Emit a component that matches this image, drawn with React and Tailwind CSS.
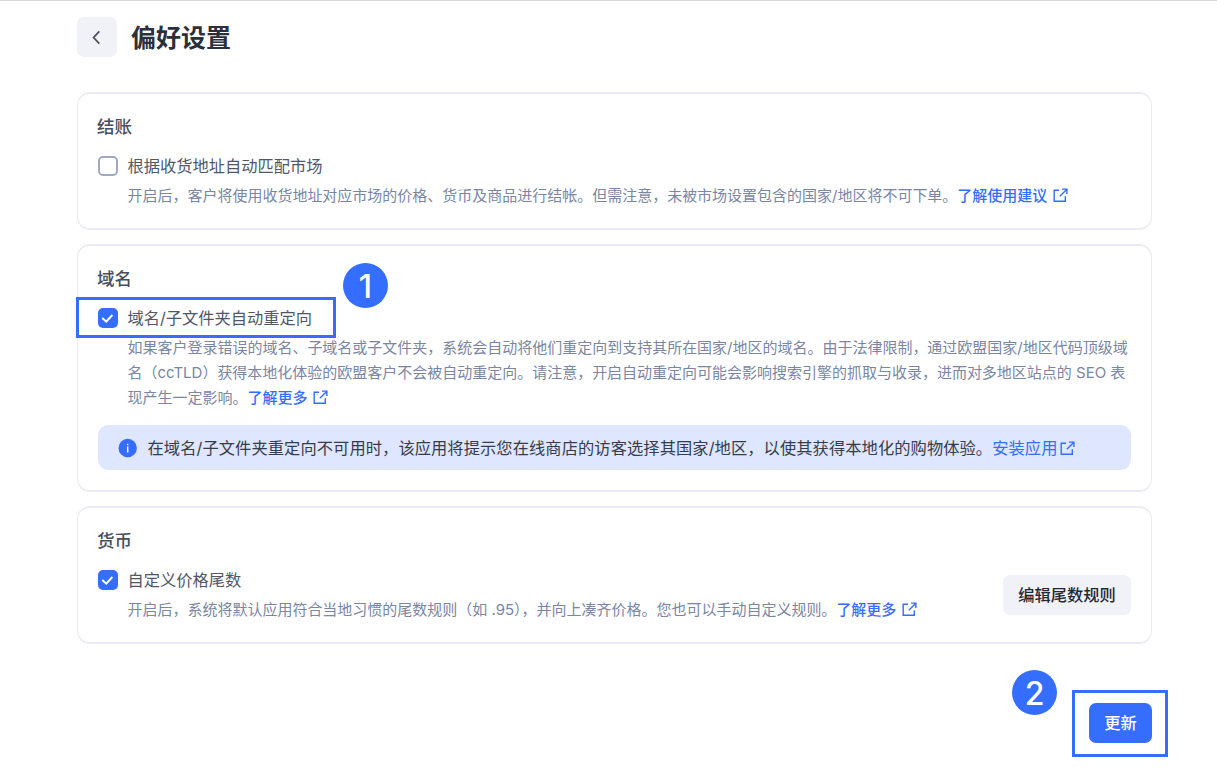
import React, { useState } from "react";

const OpenIcon = ({ className = "" }) => (
  <svg
    className={`inline-block h-[15px] w-[15px] align-[-2px] ${className}`}
    viewBox="0 0 15 15"
    fill="none"
    stroke="currentColor"
    strokeWidth="1.4"
  >
    <path d="M6 2.2H1.2V13.3H12.3V8.3" />
    <path d="M9 1.1H13.9V6M13.6 1.4L6.8 8.2" />
  </svg>
);

const CheckBox = ({ checked, onChange }) => (
  <button
    type="button"
    role="checkbox"
    aria-checked={checked}
    onClick={onChange}
    className={
      checked
        ? "mb-0.5 flex h-5 w-5 shrink-0 items-center justify-center rounded-[5px] bg-[#356dff]"
        : "mb-0.5 h-5 w-5 shrink-0 rounded-[5px] border-2 border-[#a0a8c2] bg-white"
    }
  >
    {checked && (
      <svg className="h-5 w-5" viewBox="0 0 20 20" fill="none">
        <path
          d="M4.3 10.1L8.2 13.7L14.4 7"
          stroke="white"
          strokeWidth="2"
        />
      </svg>
    )}
  </button>
);

const Card = ({ title, children }) => (
  <section className="rounded-[13px] border-x border-y-2 border-[#ebecf3] p-5">
    <h2 className="-ml-px text-[17.5px] leading-[25px] font-medium text-[#474f5e]">
      {title}
    </h2>
    {children}
  </section>
);

const Option = ({ label, checked, onChange, marker, children }) => (
  <div>
    <div className="relative mt-[15px] flex h-[25px] items-center gap-[9.5px]">
      <CheckBox checked={checked} onChange={onChange} />
      <span className="text-[16.25px] leading-[25px] text-[#505867]">
        {label}
      </span>
      {marker}
    </div>
    <p className="mt-1 pl-[29.5px] text-[15px] leading-[25px] tracking-[-0.01px] whitespace-nowrap text-[#7a86a3]">
      {children}
    </p>
  </div>
);

const Link = ({ children }) => (
  <a href="#" className="font-medium text-[#356dff]">
    {children}
    <OpenIcon className="ml-1.5" />
  </a>
);

const Step = ({ number, className }) => (
  <div
    className={`absolute flex h-[45px] w-[45px] items-center justify-center rounded-full bg-[#356dff] pt-0.5 font-[Inter] text-[32px] leading-none font-medium text-white ${className}`}
  >
    {number}
  </div>
);

const App = () => {
  const [matchMarket, setMatchMarket] = useState(false);
  const [redirect, setRedirect] = useState(true);
  const [customPrice, setCustomPrice] = useState(true);

  return (
    <div className="h-[775px] w-[1217px] overflow-hidden border-t border-[#d9d9d9] bg-white pr-[65px] pl-[77px] font-[Inter,'Noto_Sans_CJK_SC',sans-serif]">
      <header className="mt-4 flex h-10 items-center gap-3.5">
        <button className="flex h-10 w-10 items-center justify-center rounded-[7px] bg-[#f1f2f8]">
          <svg className="h-5 w-5" viewBox="0 0 20 20" fill="none">
            <path d="M12.3 4.4L6.6 10.5L12.3 16.6" stroke="#474f5e" strokeWidth="1.7" />
          </svg>
        </button>
        <h1 className="pt-0.5 text-[25px] leading-10 font-bold text-[#2c303b]">
          偏好设置
        </h1>
      </header>

      <main className="mt-[35px] flex flex-col gap-3.5">
        <Card title="结账">
          <Option
            label="根据收货地址自动匹配市场"
            checked={matchMarket}
            onChange={() => setMatchMarket(!matchMarket)}
          >
            开启后，客户将使用收货地址对应市场的价格、货币及商品进行结帐。但需注意，未被市场设置包含的国家/地区将不可下单。
            <Link>了解使用建议</Link>
          </Option>
        </Card>

        <Card title="域名">
          <Option
            label="域名/子文件夹自动重定向"
            checked={redirect}
            onChange={() => setRedirect(!redirect)}
            marker={
              <>
                <div className="pointer-events-none absolute -top-[9px] -left-[22px] h-[41px] w-[260px] border-3 border-[#356dff]" />
                <Step number={1} className="-top-[43px] left-[245px]" />
              </>
            }
          >
            如果客户登录错误的域名、子域名或子文件夹，系统会自动将他们重定向到支持其所在国家/地区的域名。由于法律限制，通过欧盟国家/地区代码顶级域
            <br />
            名（ccTLD）获得本地化体验的欧盟客户不会被自动重定向。请注意，开启自动重定向可能会影响搜索引擎的抓取与收录，进而对多地区站点的 SEO 表
            <br />
            现产生一定影响。
            <Link>了解更多</Link>
          </Option>
          <div className="mt-[15px] flex h-[45px] items-center rounded-[10px] bg-[#dfe6ff] pt-px pl-5 text-[16.25px] tracking-[0.08px] whitespace-nowrap text-[#363c49]">
            <svg className="mr-[9.5px] h-5 w-5" viewBox="0 0 20 20">
              <circle cx="9.7" cy="10" r="9.2" fill="#356dff" />
              <path d="M9 8.6H10.4V14.4H9ZM9 5.8H10.4V7.3H9Z" fill="white" />
            </svg>
            <span>
              在域名/子文件夹重定向不可用时，该应用将提示您在线商店的访客选择其国家/地区，以使其获得本地化的购物体验。
            </span>
            <a href="#" className="text-[#356dff]">
              安装应用
              <OpenIcon className="ml-0.5" />
            </a>
          </div>
        </Card>

        <Card title="货币">
          <div className="flex items-center justify-between">
            <Option
              label="自定义价格尾数"
              checked={customPrice}
              onChange={() => setCustomPrice(!customPrice)}
            >
              开启后，系统将默认应用符合当地习惯的尾数规则（如 .95），并向上凑齐价格。您也可以手动自定义规则。
              <Link>了解更多</Link>
            </Option>
            <button className="mt-[15px] h-10 w-32 rounded-[7px] bg-[#f1f2f8] text-[16.25px] font-medium text-[#242833]">
              编辑尾数规则
            </button>
          </div>
        </Card>
      </main>

      <footer className="mt-[59px] flex justify-end">
        <div className="relative">
          <button className="h-10 w-[63px] rounded-[7px] bg-[#356dff] text-[16.25px] font-medium text-white">
            更新
          </button>
          <div className="pointer-events-none absolute -top-[13px] -left-[17px] h-[67px] w-[96px] border-3 border-[#356dff]" />
          <Step number={2} className="-top-[33px] -left-[77px]" />
        </div>
      </footer>
    </div>
  );
};

export default App;
